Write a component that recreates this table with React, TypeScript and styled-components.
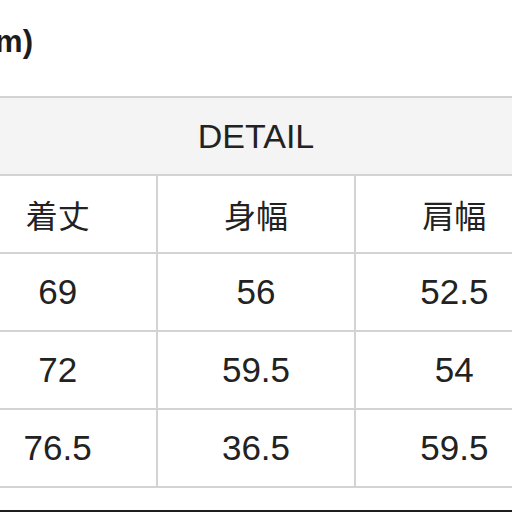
import React from "react";
import styled, { createGlobalStyle } from "styled-components";

const GlobalStyle = createGlobalStyle`
  html, body {
    margin: 0;
    padding: 0;
    background: #ffffff;
    overflow: hidden;
  }
  body {
    font-family: "Liberation Sans", "Noto Sans CJK JP", Arial, sans-serif;
    color: #222222;
  }
`;

const headers = ["着丈", "身幅", "肩幅"];

const rows = [
  { id: 1, values: ["69", "56", "52.5"] },
  { id: 2, values: ["72", "59.5", "54"] },
  { id: 3, values: ["76.5", "36.5", "59.5"] },
];

const Viewport = styled.div`
  width: 512px;
  height: 512px;
  display: flex;
  justify-content: center;
  overflow: hidden;
`;

const Page = styled.div`
  flex: 0 0 597px;
  width: 597px;
  height: 512px;
  display: flex;
  flex-direction: column;
`;

const Title = styled.div`
  margin-top: 26px;
  padding-left: 10px;
  font: 700 31px/31px "Liberation Sans", "Noto Sans CJK JP", sans-serif;
  color: #1c1c1c;
`;

const Table = styled.table`
  margin-top: 39px;
  width: 597px;
  border-collapse: collapse;
  table-layout: fixed;
`;

const Cell = styled.td<{ $head?: boolean }>`
  height: 76px;
  padding: 0;
  border: 2px solid #d3d3d3;
  text-align: center;
  vertical-align: middle;
  background: ${(p) => (p.$head ? "#f4f4f4" : "#ffffff")};
  font: 400 ${(p) => (p.$head ? "34px" : "35px")} "Liberation Sans", "Noto Sans CJK JP", sans-serif;
  color: #222222;
`;

const LabelCell = styled(Cell)`
  font-size: 32px;
  font-family: "Noto Sans CJK JP", "Liberation Sans", sans-serif;
  font-weight: 400;
`;

const Spacer = styled.div`
  flex: 1;
`;

const BottomRule = styled.div`
  height: 2px;
  background: #1e1e1e;
`;

const App = () => {
  return (
    <>
      <GlobalStyle />
      <Viewport>
        <Page>
          <Title>(cm)</Title>
          <Table>
            <tbody>
              <tr>
                <Cell $head colSpan={3}>DETAIL</Cell>
              </tr>
              <tr>
                {headers.map((h) => (
                  <LabelCell key={h}>{h}</LabelCell>
                ))}
              </tr>
              {rows.map((r) => (
                <tr key={r.id}>
                  {r.values.map((v, i) => (
                    <Cell key={i}>{v}</Cell>
                  ))}
                </tr>
              ))}
            </tbody>
          </Table>
          <Spacer />
          <BottomRule />
        </Page>
      </Viewport>
    </>
  );
};

export default App;
